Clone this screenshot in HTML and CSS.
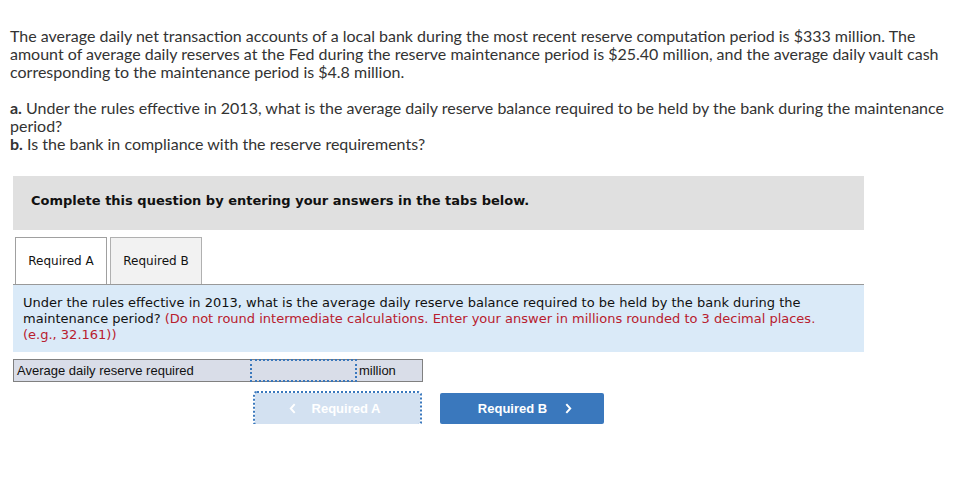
FILE: index.html
```html
<!DOCTYPE html>
<html>
	<head>
		<link rel="stylesheet" href="styles.css">
	</head>
	<body>
		<div class="question">
			<p>The average daily net transaction accounts of a local bank during the most recent reserve computation period is $333 million. The amount of average daily reserves at the Fed during the reserve maintenance period is $25.40 million, and the average daily vault cash corresponding to the maintenance period is $4.8 million.</p>
			<p><b>a.</b> Under the rules effective in 2013, what is the average daily reserve balance required to be held by the bank during the maintenance period?<br><b>b.</b> Is the bank in compliance with the reserve requirements?</p>
		</div>
		<div class="work">
			<div class="banner">Complete this question by entering your answers in the tabs below.</div>
			<div class="tabs">
				<div class="tab active">Required A</div>
				<div class="tab">Required B</div>
			</div>
			<div class="prompt">
				Under the rules effective in 2013, what is the average daily reserve balance required to be held by the bank during the maintenance period? <span class="hint">(Do not round intermediate calculations. Enter your answer in millions rounded to 3 decimal places. (e.g., 32.161))</span>
			</div>
			<div class="answer">
				<div class="label">Average daily reserve required</div>
				<div class="field"></div>
				<div class="unit">million</div>
			</div>
			<div class="nav">
				<button class="navbtn prev">
					<svg viewBox="0 0 8 12" width="7" height="11"><path d="M6.5 1 L2 6 L6.5 11" fill="none" stroke="white" stroke-width="2.2"/></svg>
					<span>Required A</span>
				</button>
				<button class="navbtn next">
					<span>Required B</span>
					<svg viewBox="0 0 8 12" width="7" height="11"><path d="M1.5 1 L6 6 L1.5 11" fill="none" stroke="white" stroke-width="2.2"/></svg>
				</button>
			</div>
		</div>
	</body>
</html>
```

FILE: styles.css
```css
body {
	margin: 0;
	background: white;
}
.question {
	padding: 27px 10px 0 10px;
	font-family: Lato, sans-serif;
	font-size: 16px;
	line-height: 18px;
	color: #333;
}
.question p {
	margin: 0 0 18px 0;
}
.work {
	margin: 23px 0 0 13px;
	width: 851px;
	font-family: "DejaVu Sans", Verdana, sans-serif;
}
.banner {
	height: 54px;
	background: #e0e0e0;
	padding: 0 0 6px 18px;
	box-sizing: border-box;
	display: flex;
	align-items: center;
	font-size: 13px;
	font-weight: bold;
	color: #111;
}
.tabs {
	display: flex;
	gap: 3px;
	margin-top: 7px;
	padding-left: 2px;
	border-bottom: 1px solid #999;
}
.tab {
	width: 92px;
	height: 47px;
	box-sizing: border-box;
	border: 1px solid #b0b0b0;
	border-bottom: none;
	background: #f2f2f2;
	display: flex;
	align-items: center;
	justify-content: center;
	font-size: 12px;
	color: #111;
}
.tab.active {
	background: white;
	border-color: #a0a0a0;
}
.prompt {
	background: #daeaf8;
	padding: 10px 40px 9px 10px;
	font-size: 13px;
	line-height: 16px;
	color: #111;
}
.hint {
	color: #b8202e;
}
.answer {
	display: flex;
	width: 410px;
	height: 23px;
	box-sizing: border-box;
	margin-top: 7px;
	border: 1px solid #808080;
	background: #d9dde8;
	font-family: "Liberation Sans", Arial, sans-serif;
	font-size: 13px;
	color: #111;
}
.label {
	width: 233px;
	padding-left: 3px;
	display: flex;
	align-items: center;
}
.field {
	width: 107px;
	box-sizing: border-box;
	border: 2px dotted #3a78bd;
	margin-top: -1px;
	margin-bottom: -1px;
}
.unit {
	padding-left: 2px;
	display: flex;
	align-items: center;
}
.nav {
	display: flex;
	gap: 20px;
	margin: 11px 0 0 242px;
}
.navbtn {
	width: 165px;
	height: 31px;
	border: none;
	border-radius: 2px;
	display: flex;
	align-items: center;
	justify-content: center;
	gap: 16px;
	font-family: "Liberation Sans", Arial, sans-serif;
	font-size: 13px;
	font-weight: bold;
	color: white;
	cursor: pointer;
}
.prev {
	background: #d3e1f1;
	outline: 2px dotted #3a78bd;
	padding-right: 12px;
}
.next {
	background: #3a78bd;
	width: 164px;
	gap: 18px;
	padding-left: 12px;
}
```
